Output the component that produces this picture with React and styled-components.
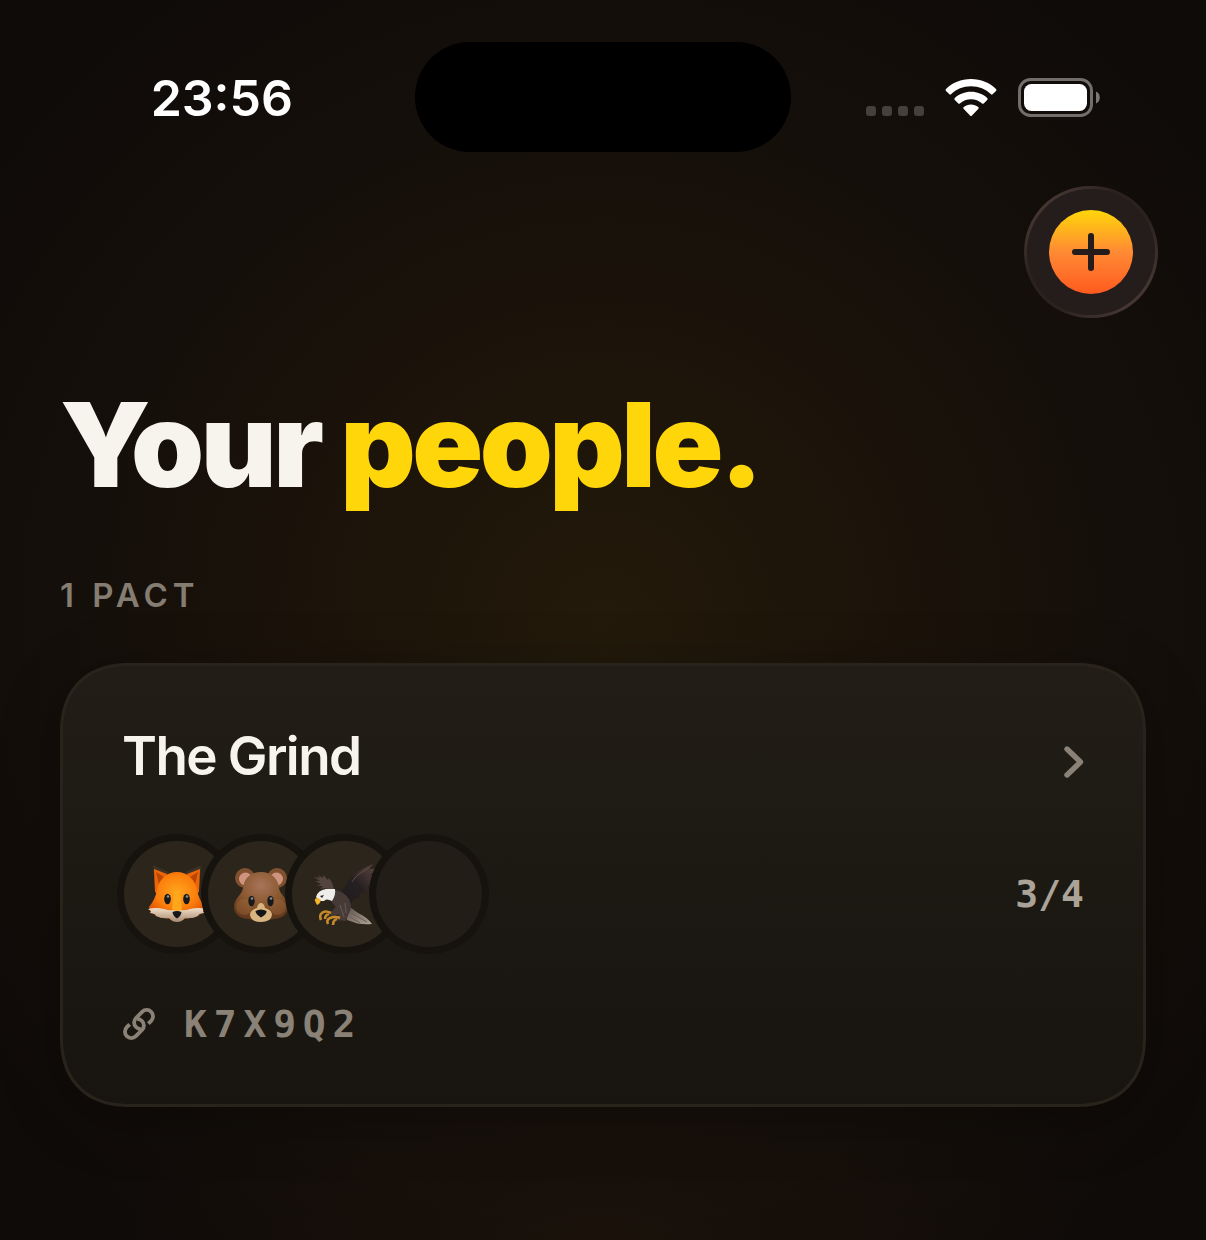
import React from 'react';
import styled, { createGlobalStyle } from 'styled-components';

const members = [
  { id: 'fox', label: 'Fox' },
  { id: 'bear', label: 'Bear' },
  { id: 'eagle', label: 'Eagle' },
];

const App = () => {
  return (
    <>
      <GlobalStyle />
      <Screen>
        <StatusBar>
          <Time>23:56</Time>
          <Island />
          <StatusIcons>
            <SignalDots />
            <WifiIcon />
            <BatteryIcon />
          </StatusIcons>
        </StatusBar>
        <Toolbar>
          <AddButton type='button' aria-label='Create a pact'>
            <span>
              <PlusIcon />
            </span>
          </AddButton>
        </Toolbar>
        <Content>
          <Title>
            Your <em>people.</em>
          </Title>
          <Caption>1 PACT</Caption>
          <PactCard href='#the-grind'>
            <Row>
              <PactName>The Grind</PactName>
              <ChevronIcon />
            </Row>
            <Row>
              <Avatars>
                {members.map((member) => {
                  return (
                    <Avatar key={member.id}>
                      <Animal {...member} />
                    </Avatar>
                  );
                })}
                <Avatar $empty />
              </Avatars>
              <Count>3/4</Count>
            </Row>
            <Invite>
              <LinkIcon />
              <Code>K7X9Q2</Code>
            </Invite>
          </PactCard>
        </Content>
      </Screen>
    </>
  );
};

const SignalDots = () => (
  <svg width='58' height='38' viewBox='0 0 58 38' fill='#44403d' aria-hidden='true'>
    {[0, 16, 32, 48].map((x) => (
      <rect key={x} x={x} y='28' width='10' height='10' rx='3' />
    ))}
  </svg>
);

const WifiIcon = () => (
  <svg width='52' height='38' viewBox='0 0 52 38' fill='#fff' aria-hidden='true'>
    <path d='M26 1C35.9 1 44.8 4.8 51 11Q52 12 51 13L47.6 16.3Q46.8 17.1 46 16.3C40.7 11.2 33.8 8.3 26 8.3S11.3 11.2 6 16.3Q5.2 17.1 4.4 16.3L1 13Q0 12 1 11C7.2 4.8 16.1 1 26 1Z' />
    <path d='M26 13.8C32.2 13.8 37.9 16.1 42.2 20Q43.2 21 42.2 22L38.7 25.4Q37.9 26.2 37.1 25.4C34.1 22.8 30.2 21.2 26 21.2S17.9 22.8 14.9 25.4Q14.1 26.2 13.3 25.4L9.8 22Q8.8 21 9.8 20C14.1 16.1 19.8 13.8 26 13.8Z' />
    <path d='M26 26.4C28.8 26.4 31.3 27.4 33.2 29Q34.2 30 33.2 31L27 37.4Q26 38.4 25 37.4L18.8 31Q17.8 30 18.8 29C20.7 27.4 23.2 26.4 26 26.4Z' />
  </svg>
);

const BatteryIcon = () => (
  <svg width='83' height='40' viewBox='0 0 83 40' aria-hidden='true'>
    <rect x='1.5' y='2.5' width='72' height='36' rx='11' fill='none' stroke='#726e6c' strokeWidth='3' />
    <rect x='6' y='7' width='63' height='27' rx='7.5' fill='#fff' />
    <path d='M78 14.5C83 16 83 25 78 26.5Z' fill='#7c7876' />
  </svg>
);

const PlusIcon = () => (
  <svg width='40' height='40' viewBox='0 0 40 40' aria-hidden='true'>
    <path d='M20 4V36M4 20H36' stroke='#241c1a' strokeWidth='6' strokeLinecap='round' />
  </svg>
);

const ChevronIcon = () => (
  <Chevron width='20' height='32' viewBox='0 0 20 32' aria-hidden='true'>
    <path d='M3 3L16.5 16L3 29' fill='none' stroke='#8a8276' strokeWidth='5.4' strokeLinecap='round' strokeLinejoin='round' />
  </Chevron>
);

const hook = 'M6.4 6H10.2A6 6 0 0 0 10.2 -6H2A6 6 0 0 0 -4 0Q-4 3 -2 4.6';

// two hooked links, the second is the first turned half way round
const LinkIcon = () => (
  <svg width='34' height='34' viewBox='-16 -16 32 32' fill='none' stroke='#8a8276' strokeWidth='3.6' aria-hidden='true'>
    <path transform='rotate(-45)' d={hook} />
    <path transform='rotate(135)' d={hook} />
  </svg>
);

const Fox = () => (
  <>
    <defs>
      <radialGradient id='foxFur' cx='50%' cy='42%' r='60%'>
        <stop offset='0' stopColor='#ffa51d' />
        <stop offset='0.6' stopColor='#fb7e0c' />
        <stop offset='1' stopColor='#de5207' />
      </radialGradient>
      <linearGradient id='foxCheek' x1='0' y1='0' x2='0' y2='1'>
        <stop offset='0' stopColor='#f1dfc9' />
        <stop offset='1' stopColor='#a88a70' />
      </linearGradient>
    </defs>
    <path d='M6 4Q5 2 8 3L22 9L14 26L8 27Z' fill='#3b3225' />
    <path d='M54 4Q55 2 52 3L38 9L46 26L52 27Z' fill='#3b3225' />
    <path d='M7 6L20 11L12 32L8 29Z' fill='#ed6508' />
    <path d='M53 6L40 11L48 32L52 29Z' fill='#ed6508' />
    <path d='M9 9L17 14L12 22Z' fill='#b94605' />
    <path d='M51 9L43 14L48 22Z' fill='#b94605' />
    <path d='M30 9C40 9 48 16 50 27Q52 37 58 44L57 47C54 54 42 56 30 56S6 54 3 47L2 44Q8 37 10 27C12 16 20 9 30 9Z' fill='url(#foxFur)' />
    <path d='M1 46Q8 44 17 46Q23 48 26 47L30 45L34 47Q37 48 43 46Q52 44 59 46L56 48L57 50L52 51L51 53Q45 56 38 55Q35 59 30 59T22 55Q15 56 9 53L8 51L3 50L4 48Z' fill='url(#foxCheek)' />
    <path d='M27 28H33L35 46Q30 50 25 46Z' fill='#ffa61b' />
    <ellipse cx='20.5' cy='36' rx='3.3' ry='5.3' fill='#17191b' />
    <ellipse cx='39.5' cy='36' rx='3.3' ry='5.3' fill='#17191b' />
    <circle cx='21' cy='33.5' r='1.3' fill='#8a8d90' />
    <circle cx='40' cy='33.5' r='1.3' fill='#8a8d90' />
    <path d='M25.5 49Q30 47 34.5 49Q34 53 30 55.5Q26 53 25.5 49Z' fill='#171719' />
  </>
);

const Bear = () => (
  <>
    <defs>
      <radialGradient id='bearFur' cx='50%' cy='28%' r='70%'>
        <stop offset='0' stopColor='#a9745a' />
        <stop offset='0.55' stopColor='#89582f' />
        <stop offset='1' stopColor='#62391c' />
      </radialGradient>
    </defs>
    <circle cx='14' cy='15' r='10' fill='#80512f' />
    <circle cx='46' cy='15' r='10' fill='#80512f' />
    <circle cx='14.5' cy='16' r='6.5' fill='#ce9480' />
    <circle cx='45.5' cy='16' r='6.5' fill='#ce9480' />
    <path d='M30 9C41 9 47 16 48 25C49 32 57 35 57 44C57 52 50 56 42 56Q36 58 30 58T18 56C10 56 3 52 3 44C3 35 11 32 12 25C13 16 19 9 30 9Z' fill='url(#bearFur)' />
    <ellipse cx='13' cy='44' rx='8' ry='8' fill='#a36d3f' opacity='0.35' />
    <ellipse cx='47' cy='44' rx='8' ry='8' fill='#a36d3f' opacity='0.35' />
    <path d='M30 40Q33 40 34 45Q41 47 41 52Q40 59 30 59T19 52Q19 47 26 45Q27 40 30 40Z' fill='#d8b580' />
    <ellipse cx='20.5' cy='38' rx='3.2' ry='5.3' fill='#17191b' />
    <ellipse cx='39.5' cy='38' rx='3.2' ry='5.3' fill='#17191b' />
    <circle cx='21' cy='35.5' r='1.3' fill='#8a8d90' />
    <circle cx='40' cy='35.5' r='1.3' fill='#8a8d90' />
    <path d='M24.5 48Q30 45 35.5 48Q36 51 30 54.5Q24.5 51 24.5 48Z' fill='#141416' />
  </>
);

const Eagle = () => (
  <>
    <defs>
      <linearGradient id='eagleWing' x1='0' y1='1' x2='1' y2='0'>
        <stop offset='0' stopColor='#1e1a1c' />
        <stop offset='0.5' stopColor='#262022' />
        <stop offset='1' stopColor='#5e4740' />
      </linearGradient>
      <linearGradient id='eagleTail' x1='0' y1='0' x2='1' y2='1'>
        <stop offset='0' stopColor='#5d5049' />
        <stop offset='1' stopColor='#b0a496' />
      </linearGradient>
    </defs>
    <path d='M18 28Q12 24 5 26L8 23L2 23L6 21L0 18L5 18L-1 14L5 15L3 12L8 15L8 12L13 17L14 15Q18 20 19 27Z' fill='#54443f' />
    <path d='M23 31Q30 26 33 18Q38 9 58 1Q57 4 50 8Q57 5 61 6Q60 9 54 12L61 11L56 15L60 16L55 19L57 21L52 23L54 26L49 27L50 30L45 30L44 35L38 37L36 41Z' fill='url(#eagleWing)' />
    <path d='M55 5Q42 10 37 19' fill='none' stroke='#6b5750' strokeWidth='0.8' />
    <path d='M31 46L35 44L43 50Q52 54 57 61Q45 62 38 59L32 57Z' fill='url(#eagleTail)' />
    <path d='M36 50L52 59M35 54L45 60' stroke='#6b5e56' strokeWidth='1' />
    <path d='M18 27Q28 27 34 36Q38 44 34 50L31 58L21 57L24 51L17 54L15 50L21 44Q15 38 16 34Z' fill='#463a37' />
    <path d='M25 42L29 54M30 40L31 50' stroke='#65554e' strokeWidth='1.2' />
    <path d='M1 34Q3 27 11 26L20 26Q21 32 17 38Q11 35 9 38L4 38Z' fill='#efedea' />
    <path d='M3 35Q-1 35 0 38L2 42Q5 41 6 37Z' fill='#f4b32a' />
    <path d='M5 33L9 32L7 35Z' fill='#27221f' />
    <path d='M16 50Q10 47 7 50Q4 52 6 57M14 51Q10 52 10 56M25 55Q20 53 15 55Q11 57 13 61M22 56Q18 57 18 62' fill='none' stroke='#c48a2c' strokeWidth='2.6' />
  </>
);

const drawings = { fox: Fox, bear: Bear, eagle: Eagle };

const Animal = ({ id, label }) => {
  const Drawing = drawings[id];
  return (
    <svg width='62' height='62' viewBox='0 0 60 62' role='img' aria-label={label}>
      <Drawing />
    </svg>
  );
};

const GlobalStyle = createGlobalStyle`
  * {
    box-sizing: border-box;
    margin: 0;
  }
  body {
    background: #0f0b09;
    font-family: Inter, sans-serif;
    color: #f7f4ed;
  }
  svg {
    display: block;
    flex-shrink: 0;
  }
`;

const Screen = styled.main`
  min-height: 100vh;
  padding: 42px 0 60px;
  background:
    radial-gradient(ellipse 40% 16% at 50% 100%, rgba(28, 18, 10, 0.7) 0%, transparent 100%),
    radial-gradient(circle at 50% 50%, #231a0b 0%, #1c130a 32%, #140f0a 62%, #0f0b09 88%);
`;

const StatusBar = styled.header`
  display: grid;
  grid-template-columns: 1fr 376px 1fr;
  align-items: center;
`;

const Time = styled.time`
  padding: 2px 122px 0 0;
  text-align: right;
  font-size: 50px;
  line-height: 60px;
  font-weight: 600;
  color: #fff;
`;

const Island = styled.div`
  height: 110px;
  border-radius: 55px / 55px;
  background: #000;
`;

const StatusIcons = styled.div`
  display: flex;
  align-items: center;
  justify-content: flex-end;
  gap: 21px;
  padding-right: 105px;
`;

const Toolbar = styled.div`
  display: flex;
  justify-content: flex-end;
  padding: 34px 48px 0;
`;

const AddButton = styled.button`
  display: grid;
  place-items: center;
  width: 134px;
  height: 132px;
  padding: 0;
  border: 3px solid transparent;
  border-radius: 66px;
  background:
    linear-gradient(#251d1b, #251d1b) padding-box,
    linear-gradient(135deg, #4a3a35 10%, #2b2220 35%, #2b2220 60%, #4a3a35 90%) border-box;
  cursor: pointer;
  span {
    display: grid;
    place-items: center;
    width: 84px;
    height: 84px;
    border-radius: 50%;
    background: linear-gradient(#ffd60a, #ff8a34 50%, #ff5a1f);
  }
`;

const Content = styled.section`
  padding: 67px 60px 0;
`;

const Title = styled.h1`
  font-size: 117px;
  line-height: 120px;
  font-weight: 900;
  letter-spacing: -0.03em;
  em {
    font-style: normal;
    color: #ffd60a;
  }
`;

const Caption = styled.p`
  margin: 70px 0 48px;
  font-size: 33px;
  line-height: 40px;
  font-weight: 600;
  letter-spacing: 0.15em;
  color: #857d71;
`;

const PactCard = styled.a`
  display: flex;
  flex-direction: column;
  gap: 53px;
  padding: 58px 59px 56px;
  border: 3px solid #29241b;
  border-radius: 70px;
  corner-shape: superellipse(1.2);
  background: linear-gradient(#221d17, #1c1913 50%, #181510);
  box-shadow: 0 12px 60px rgba(0, 0, 0, 0.3);
  color: inherit;
  text-decoration: none;
`;

const Row = styled.div`
  display: flex;
  align-items: center;
  justify-content: space-between;
`;

const PactName = styled.h2`
  font-size: 53px;
  line-height: 64px;
  font-weight: 600;
  letter-spacing: -0.03em;
`;

const Chevron = styled.svg`
  margin-top: 12px;
`;

const Avatars = styled.div`
  display: flex;
  padding: 0 2px;
`;

const Avatar = styled.div`
  display: grid;
  place-items: center;
  width: 106px;
  height: 106px;
  border-radius: 50%;
  background: ${({ $empty }) => ($empty ? '#221d17' : '#2c251b')};
  box-shadow: 0 0 0 7px #16130e;
  & + & {
    margin-left: -22px;
  }
`;

const Count = styled.span`
  font-family: 'DejaVu Sans Mono', monospace;
  font-size: 38px;
  line-height: 48px;
  font-weight: 700;
  color: #aca398;
`;

const Invite = styled.div`
  display: flex;
  align-items: center;
  gap: 28px;
`;

const Code = styled.span`
  font-family: 'DejaVu Sans Mono', monospace;
  font-size: 38px;
  line-height: 48px;
  font-weight: 700;
  letter-spacing: 0.18em;
  color: #8a8276;
`;

export default App;
